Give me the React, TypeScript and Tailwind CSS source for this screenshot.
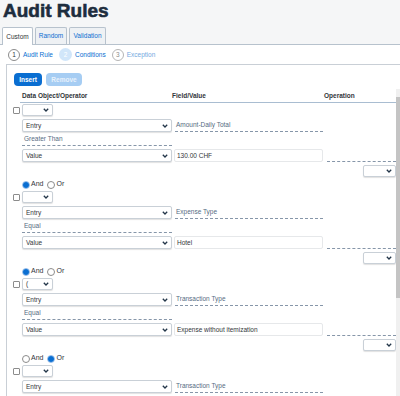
import React from 'react';

interface Rule {
  paren: string;
  field: string;
  op: string;
  value: string;
  join: 'and' | 'or' | null;
}

const rules: Rule[] = [
  { paren: "", field: "Amount-Daily Total", op: "Greater Than", value: "130.00 CHF", join: 'and' },
  { paren: "", field: "Expense Type", op: "Equal", value: "Hotel", join: 'and' },
  { paren: "(", field: "Transaction Type", op: "Equal", value: "Expense without itemization", join: 'or' },
  { paren: "", field: "Transaction Type", op: "", value: "", join: null },
];

function Chevron() {
  return (
    <svg width="6" height="4" viewBox="0 0 6 4" className="shrink-0">
      <polyline points="0.8,0.8 3,3 5.2,0.8" fill="none" stroke="#223548" strokeWidth="1.3" />
    </svg>
  );
}

function Sel({ text, w }: { text: string; w: string }) {
  return (
    <div className={`${w} h-[12px] flex items-center justify-between pl-[3px] pr-[3px] bg-white border border-[#c9d0d7] rounded-[2px] shadow-[0_1px_1px_rgba(0,0,0,0.12)]`}>
      <span className="text-[6.5px] text-[#32363a]">{text}</span>
      <Chevron />
    </div>
  );
}

function Radio({ on, label }: { on: boolean; label: string }) {
  return (
    <div className="flex items-center">
      {on ? (
        <span className="w-[8px] h-[8px] rounded-full border border-[#8fb8e8] bg-white flex items-center justify-center">
          <span className="w-[6px] h-[6px] rounded-full bg-[#0a6ed1]" />
        </span>
      ) : (
        <span className="w-[8px] h-[8px] rounded-full border border-[#8c8c8c] bg-white" />
      )}
      <span className="text-[7px] text-[#32363a] ml-[1px]">{label}</span>
    </div>
  );
}

function Block({ r, partial }: { r: Rule; partial: boolean }) {
  return (
    <div className="h-[87px] flex flex-col">
      {/* paren line */}
      <div className="h-[12px] flex items-center pl-[6px]">
        <span className="w-[7px] h-[7px] border border-[#8c8c8c] rounded-[1px] bg-white" />
        <div className="ml-[2px]"><Sel text={r.paren} w="w-[31px]" /></div>
      </div>
      {/* entry line */}
      <div className="h-[13px] mt-[3px] flex pl-[15px]">
        <Sel text="Entry" w="w-[150px] h-[13px]" />
        <div className="w-[148px] ml-[3px] h-[13px] flex items-center border-b border-dashed border-[#8696a9]">
          <span className="text-[6.5px] text-[#556b82] pl-[1px]">{r.field}</span>
        </div>
      </div>
      {!partial && (
        <>
          {/* operator line */}
          <div className="h-[15px] pl-[15px] flex">
            <div className="w-[150px] h-[14px] flex items-center border-b border-dashed border-[#8696a9]">
              <span className="text-[6.5px] text-[#556b82] pl-[2px]">{r.op}</span>
            </div>
          </div>
          {/* value line */}
          <div className="h-[13px] mt-[2px] flex pl-[15px]">
            <Sel text="Value" w="w-[150px] h-[13px]" />
            <div className="w-[149px] ml-[2px] h-[13px] flex items-center bg-white border border-[#e6e8ea] rounded-[2px]">
              <span className="text-[6.5px] text-[#32363a] pl-[2px]">{r.value}</span>
            </div>
            <div className="w-[69px] ml-[4px] border-b border-dashed border-[#8696a9]" />
          </div>
          {/* operation select */}
          <div className="h-[12px] mt-[3px] flex justify-end">
            <Sel text="" w="w-[33px]" />
          </div>
        </>
      )}
      {/* join */}
      {r.join && (
        <div className="h-[9px] mt-[3px] flex items-center pl-[15px] gap-[4px]">
          <Radio on={r.join === 'and'} label="And" />
          <Radio on={r.join === 'or'} label="Or" />
        </div>
      )}
    </div>
  );
}

export default function App() {
  return (
    <div className="w-[400px] h-[396px] overflow-hidden bg-white flex flex-col" style={{ fontFamily: '"Liberation Sans", Arial, sans-serif' }}>
      {/* Header */}
      <div className="bg-[#f5f6f7]">
        <h1 className="text-[19px] leading-[22px] font-bold text-[#1d2d3e] pl-[3px] [-webkit-text-stroke:0.6px_#1d2d3e]">Audit Rules</h1>
        <div className="mt-[5px] h-[18px] flex items-end gap-[2px] pl-[2px] border-b border-[#b7c2cd]">
          <div className="w-[31px] h-[18px] -mb-px bg-white border border-b-0 border-[#b7c2cd] rounded-t-[2px] flex items-center justify-center">
            <span className="text-[6.5px] text-[#32363a]">Custom</span>
          </div>
          <div className="w-[32px] h-[17px] bg-[#eef1f4] border border-b-0 border-[#b7c2cd] rounded-t-[2px] flex items-center justify-center">
            <span className="text-[6.5px] text-[#0a6ed1]">Random</span>
          </div>
          <div className="w-[37px] h-[17px] bg-[#eef1f4] border border-b-0 border-[#b7c2cd] rounded-t-[2px] flex items-center justify-center">
            <span className="text-[6.5px] text-[#0a6ed1]">Validation</span>
          </div>
        </div>
      </div>

      {/* Steps */}
      <div className="h-[19px] flex items-center pl-[8px]">
        <span className="w-[12px] h-[12px] rounded-full border border-[#8c8c8c] flex items-center justify-center text-[6.5px] text-[#32363a]">1</span>
        <span className="text-[6.5px] text-[#0a6ed1] ml-[3px]">Audit Rule</span>
        <span className="w-[13px] h-[13px] rounded-full bg-[#d1e6fa] flex items-center justify-center text-[6.5px] text-white ml-[6px]">2</span>
        <span className="text-[6.5px] text-[#0a6ed1] ml-[3px]">Conditions</span>
        <span className="w-[12px] h-[12px] rounded-full border border-[#b5b5b5] flex items-center justify-center text-[6.5px] text-[#8c8c8c] ml-[6px]">3</span>
        <span className="text-[6.5px] text-[#74a9e0] ml-[3px]">Exception</span>
      </div>

      {/* Panel */}
      <div className="flex-1 min-h-0 ml-[6px] border-t border-l border-[#c9cfd6] flex flex-col">
        <div className="h-[24px] pt-[8px] pl-[7px] flex gap-[4px]">
          <button className="w-[28px] h-[13px] rounded-[4px] bg-[#0a6ed1] text-white text-[6.5px] font-bold">Insert</button>
          <button className="w-[36px] h-[13px] rounded-[4px] bg-[#a6cdf3] text-[#e8f2fc] text-[6.5px] font-bold">Remove</button>
        </div>

        <div className="flex-1 min-h-0 flex">
          <div className="flex-1 min-w-0 overflow-hidden">
            <div className="ml-[13px] h-[14px] flex items-center border-b border-[#a9bdd1] text-[6.5px] font-bold text-[#32363a]">
              <span className="w-[152px] pl-[2px]">Data Object/Operator</span>
              <span className="w-[152px]">Field/Value</span>
              <span>Operation</span>
            </div>
            <div className="mt-[1px]">
              {rules.map((r, i) => (
                <Block key={i} r={r} partial={i === rules.length - 1} />
              ))}
            </div>
          </div>
          <div className="w-[4px] bg-[#f0f0f0] flex flex-col">
            <div className="mt-[8px] h-[201px] bg-[#c4c4c4]" />
          </div>
        </div>
      </div>
    </div>
  );
}
